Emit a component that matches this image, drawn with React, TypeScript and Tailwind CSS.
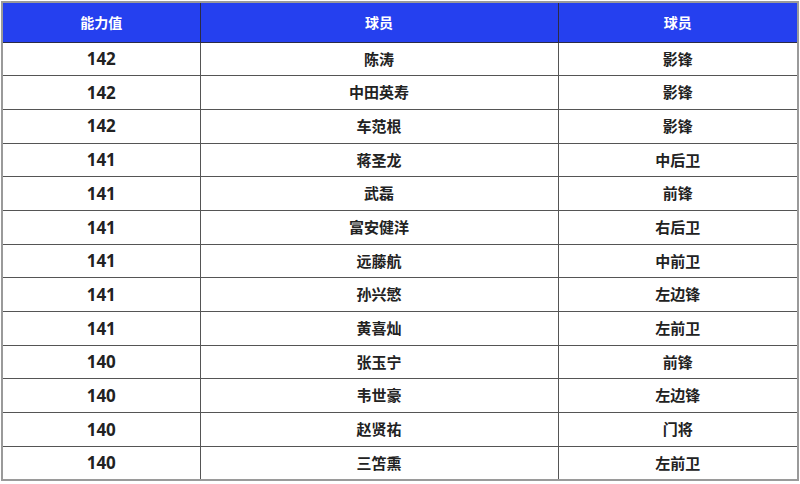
const rows: [number, string, string][] = [
  [142, '陈涛', '影锋'],
  [142, '中田英寿', '影锋'],
  [142, '车范根', '影锋'],
  [141, '蒋圣龙', '中后卫'],
  [141, '武磊', '前锋'],
  [141, '富安健洋', '右后卫'],
  [141, '远藤航', '中前卫'],
  [141, '孙兴慜', '左边锋'],
  [141, '黄喜灿', '左前卫'],
  [140, '张玉宁', '前锋'],
  [140, '韦世豪', '左边锋'],
  [140, '赵贤祐', '门将'],
  [140, '三笘熏', '左前卫'],
];

const App = () => {
  return (
    <div className="h-[484px] w-[800px] bg-white p-px font-['Noto_Sans','Noto_Sans_CJK_SC',sans-serif]">
      <table className="w-[798px] table-fixed border-collapse border-2 border-[#9a9a9a]">
        <colgroup>
          <col className="w-[198px]" />
          <col className="w-[358px]" />
          <col className="w-[240px]" />
        </colgroup>
        <thead>
          <tr className="h-[40px] bg-[#2540ef] text-[14px] font-bold text-white">
            <th className="border-b border-r border-[#2b2b45]">能力值</th>
            <th className="border-b border-r border-[#2b2b45]">球员</th>
            <th className="border-b border-[#2b2b45]">球员</th>
          </tr>
        </thead>
        <tbody className="text-[#222]">
          {rows.map(([score, name, pos], i) => (
            <tr key={i} className="h-[33.7px]">
              <td className="border border-[#555] text-center text-[17px] font-bold">{score}</td>
              <td className="border border-[#555] text-center text-[15px] font-bold">{name}</td>
              <td className="border border-[#555] text-center text-[15px] font-bold">{pos}</td>
            </tr>
          ))}
        </tbody>
      </table>
    </div>
  );
};

export default App;
